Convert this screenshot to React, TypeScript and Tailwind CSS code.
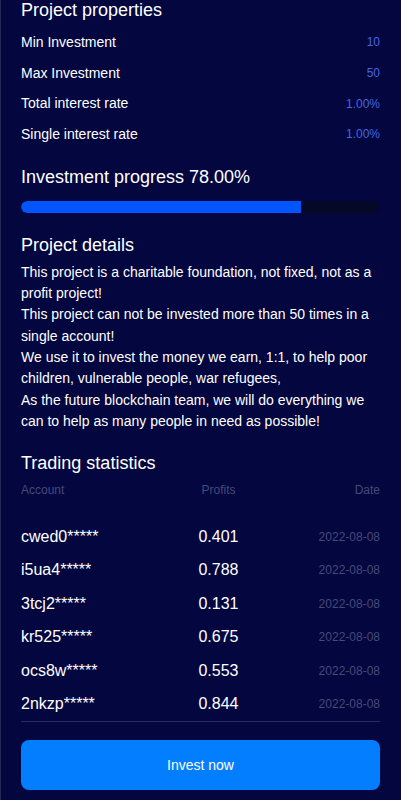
import React from "react";

const props = [
  ["Min Investment", "10"],
  ["Max Investment", "50"],
  ["Total interest rate", "1.00%"],
  ["Single interest rate", "1.00%"],
];

const rows = [
  ["cwed0*****", "0.401"],
  ["i5ua4*****", "0.788"],
  ["3tcj2*****", "0.131"],
  ["kr525*****", "0.675"],
  ["ocs8w*****", "0.553"],
  ["2nkzp*****", "0.844"],
];

export default function App() {
  return (
    <div
      className="w-[401px] h-[800px] overflow-hidden bg-[#03063f] border-l border-[#262957] pl-5 pr-[21px] text-white"
      style={{ fontFamily: '"Liberation Sans", Arial, sans-serif' }}
    >
      <h2 className="text-[18px] leading-[20px]">Project properties</h2>
      <div className="mt-[7px] flex flex-col">
        {props.map(([k, v]) => (
          <div key={k} className="h-[30.7px] flex items-center justify-between">
            <span className="text-[14px]">{k}</span>
            <span className="text-[12px] text-[#4466e0]">{v}</span>
          </div>
        ))}
      </div>

      <h2 className="mt-[17px] text-[18px] leading-[20px]">Investment progress 78.00%</h2>
      <div className="mt-[14px] h-[12px] rounded-full bg-[#050826] overflow-hidden">
        <div className="h-full bg-[#0055ff] rounded-l-full" style={{ width: "78%" }} />
      </div>

      <h2 className="mt-[22px] text-[18px] leading-[20px]">Project details</h2>
      <p className="mt-[7px] text-[14px] leading-[21.3px]">
        This project is a charitable foundation, not fixed, not as a profit project!
        <br />
        This project can not be invested more than 50 times in a single account!
        <br />
        We use it to invest the money we earn, 1:1, to help poor children, vulnerable people, war refugees,
        <br />
        As the future blockchain team, we will do everything we can to help as many people in need as possible!
      </p>

      <h2 className="mt-[21px] text-[18px] leading-[20px]">Trading statistics</h2>
      <div className="mt-[7px] flex h-[20px] items-center text-[12px] text-[#464a7a]">
        <span className="w-[158px]">Account</span>
        <span className="w-[79px] text-center">Profits</span>
        <span className="flex-1 text-right">Date</span>
      </div>
      <div className="mt-[20px] flex flex-col">
        {rows.map(([a, p]) => (
          <div key={a} className="h-[33.5px] flex items-center">
            <span className="w-[158px] text-[16px]">{a}</span>
            <span className="w-[79px] text-center text-[16px]">{p}</span>
            <span className="flex-1 text-right text-[12px] text-[#464a7a]">2022-08-08</span>
          </div>
        ))}
      </div>
      <div className="h-px bg-[#2a2d60]" />
      <button className="mt-[18px] w-full h-[50px] rounded-[8px] bg-[#037eff] text-[14px] text-white">
        Invest now
      </button>
    </div>
  );
}
